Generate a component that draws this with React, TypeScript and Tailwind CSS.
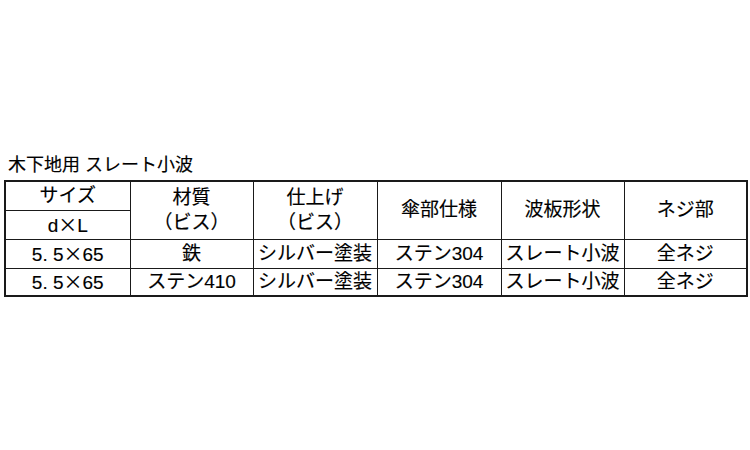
import React from "react";

const Times = () => (
  <span style={{ fontFamily: '"Noto Sans CJK JP", sans-serif' }}>×</span>
);

const size = (
  <>
    5. 5<Times />65
  </>
);

const rows: React.ReactNode[][] = [
  [size, "鉄", "シルバー塗装", "ステン304", "スレート小波", "全ネジ"],
  [size, "ステン410", "シルバー塗装", "ステン304", "スレート小波", "全ネジ"],
];

const cell = "border border-[#1a1a1a] text-center align-middle p-0";

export default function App() {
  return (
    <div
      className="w-[750px] h-[450px] bg-white text-black pt-[155px] pl-[8px] [-webkit-text-stroke:0.15px_black]"
      style={{ fontFamily: '"Liberation Sans", "Noto Sans CJK JP", sans-serif' }}
    >
      <div className="text-[18px] leading-[21px]">木下地用 スレート小波</div>
      <table className="mt-[4px] -ml-[4px] w-[742px] table-fixed border-collapse border-2 border-[#1a1a1a] text-[19px] leading-[22px]">
        <colgroup>
          <col className="w-[125px]" />
          <col className="w-[123px]" />
          <col className="w-[124px]" />
          <col className="w-[124px]" />
          <col className="w-[123px]" />
          <col className="w-[123px]" />
        </colgroup>
        <tbody>
          <tr className="h-[29px]">
            <td className={cell}>サイズ</td>
            <td className={cell} rowSpan={2}>
              <div className="leading-[25px]">材質</div>
              <div className="leading-[25px]">（ビス）</div>
            </td>
            <td className={cell} rowSpan={2}>
              <div className="leading-[25px]">仕上げ</div>
              <div className="leading-[25px]">（ビス）</div>
            </td>
            <td className={cell} rowSpan={2}>傘部仕様</td>
            <td className={cell} rowSpan={2}>波板形状</td>
            <td className={cell} rowSpan={2}>ネジ部</td>
          </tr>
          <tr className="h-[29px]">
            <td className={cell}>
              d<Times />L
            </td>
          </tr>
          {rows.map((r, i) => (
            <tr key={i} className={i === 0 ? "h-[29px]" : "h-[28px]"}>
              {r.map((c, j) => (
                <td key={j} className={cell}>
                  {c}
                </td>
              ))}
            </tr>
          ))}
        </tbody>
      </table>
    </div>
  );
}
